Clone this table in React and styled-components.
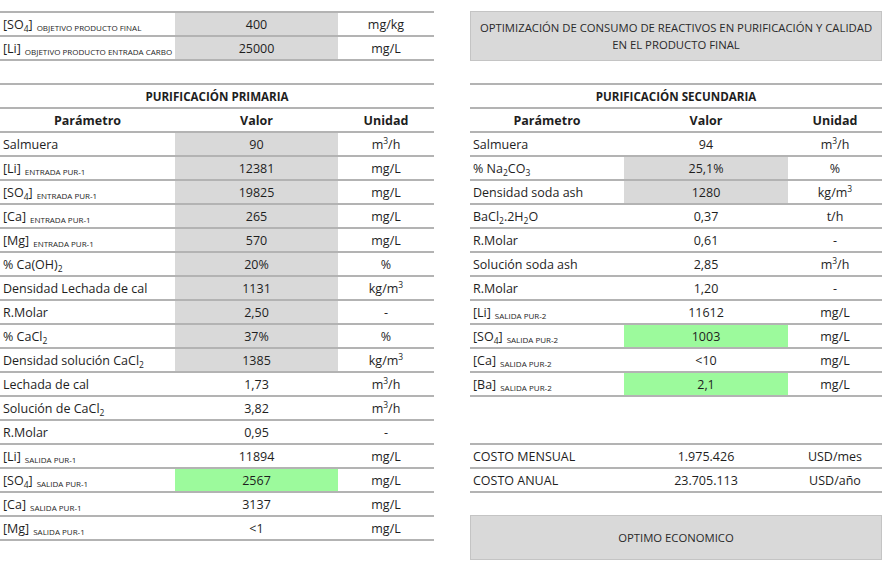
import React from "react";
import styled, { createGlobalStyle } from "styled-components";

const LINE = "#b3b3b3";
const GRAY = "#d9d9d9";
const GREEN = "#9cfa9c";

const GlobalStyle = createGlobalStyle`
  html, body {
    margin: 0;
    padding: 0;
    background: #ffffff;
  }
  body {
    font-family: "Open Sans", "Liberation Sans", sans-serif;
    font-size: 12.5px;
    color: #1e1e1e;
  }
`;

const Page = styled.div`
  display: grid;
  grid-template-columns: 434px 412px;
  column-gap: 36px;
  padding-top: 11px;
  width: 886px;
  height: 563px;
  box-sizing: border-box;
  overflow: hidden;
`;

const Column = styled.div`
  display: flex;
  flex-direction: column;
`;

const Table = styled.div`
  display: grid;
  grid-template-columns: ${(p) => p.cols};
  border-top: 2px solid ${LINE};
  margin-top: ${(p) => p.gap || 0}px;
`;

const Cell = styled.div`
  height: 24px;
  box-sizing: border-box;
  border-bottom: 2px solid ${LINE};
  display: flex;
  align-items: center;
  justify-content: ${(p) => (p.left ? "flex-start" : "center")};
  padding-left: ${(p) => (p.left ? "3px" : "0")};
  padding-top: 1px;
  background: ${(p) => p.fill || "transparent"};
  white-space: nowrap;
  overflow: hidden;
  font-weight: ${(p) => (p.bold ? 700 : 400)};
`;

const SectionTitle = styled(Cell)`
  grid-column: 1 / -1;
  font-weight: 700;
  font-size: 11.6px;
`;

const Tag = styled.span`
  font-size: 8px;
  margin-left: 4px;
  position: relative;
  top: 2px;
`;

const Sub = styled.sub`
  font-size: 8.5px;
  vertical-align: -3px;
  line-height: 0;
`;

const Sup = styled.sup`
  font-size: 8.5px;
  vertical-align: 5px;
  line-height: 0;
`;

const TitleBox = styled.div`
  height: ${(p) => p.h || 50}px;
  box-sizing: border-box;
  background: ${GRAY};
  border: 1px solid #c4c4c4;
  display: flex;
  align-items: center;
  justify-content: center;
  text-align: center;
  font-size: 11.3px;
  line-height: 17px;
  color: #2a2a2a;
  margin-top: ${(p) => p.gap || 0}px;
`;

const m3h = (
  <>
    m<Sup>3</Sup>/h
  </>
);
const kgm3 = (
  <>
    kg/m<Sup>3</Sup>
  </>
);
const SO4 = (
  <>
    [SO<Sub>4</Sub>]
  </>
);

const topRows = [
  [<>{SO4}<Tag>OBJETIVO PRODUCTO FINAL</Tag></>, "400", "mg/kg", GRAY],
  [<>[Li]<Tag>OBJETIVO PRODUCTO ENTRADA CARBO</Tag></>, "25000", "mg/L", GRAY],
];

const primaryRows = [
  ["Salmuera", "90", m3h, GRAY],
  [<>[Li]<Tag>ENTRADA PUR-1</Tag></>, "12381", "mg/L", GRAY],
  [<>{SO4}<Tag>ENTRADA PUR-1</Tag></>, "19825", "mg/L", GRAY],
  [<>[Ca]<Tag>ENTRADA PUR-1</Tag></>, "265", "mg/L", GRAY],
  [<>[Mg]<Tag>ENTRADA PUR-1</Tag></>, "570", "mg/L", GRAY],
  [<>% Ca(OH)<Sub>2</Sub></>, "20%", "%", GRAY],
  ["Densidad Lechada de cal", "1131", kgm3, GRAY],
  ["R.Molar", "2,50", "-", GRAY],
  [<>% CaCl<Sub>2</Sub></>, "37%", "%", GRAY],
  [<>Densidad solución CaCl<Sub>2</Sub></>, "1385", kgm3, GRAY],
  ["Lechada de cal", "1,73", m3h],
  [<>Solución de CaCl<Sub>2</Sub></>, "3,82", m3h],
  ["R.Molar", "0,95", "-"],
  [<>[Li]<Tag>SALIDA PUR-1</Tag></>, "11894", "mg/L"],
  [<>{SO4}<Tag>SALIDA PUR-1</Tag></>, "2567", "mg/L", GREEN],
  [<>[Ca]<Tag>SALIDA PUR-1</Tag></>, "3137", "mg/L"],
  [<>[Mg]<Tag>SALIDA PUR-1</Tag></>, "<1", "mg/L"],
];

const secondaryRows = [
  ["Salmuera", "94", m3h],
  [<>% Na<Sub>2</Sub>CO<Sub>3</Sub></>, "25,1%", "%", GRAY],
  ["Densidad soda ash", "1280", kgm3, GRAY],
  [<>BaCl<Sub>2</Sub>.2H<Sub>2</Sub>O</>, "0,37", "t/h"],
  ["R.Molar", "0,61", "-"],
  ["Solución soda ash", "2,85", m3h],
  ["R.Molar", "1,20", "-"],
  [<>[Li]<Tag>SALIDA PUR-2</Tag></>, "11612", "mg/L"],
  [<>{SO4}<Tag>SALIDA PUR-2</Tag></>, "1003", "mg/L", GREEN],
  [<>[Ca]<Tag>SALIDA PUR-2</Tag></>, "<10", "mg/L"],
  [<>[Ba]<Tag>SALIDA PUR-2</Tag></>, "2,1", "mg/L", GREEN],
];

const costRows = [
  ["COSTO MENSUAL", "1.975.426", "USD/mes"],
  ["COSTO ANUAL", "23.705.113", "USD/año"],
];

function Rows({ rows }) {
  return rows.map(([label, value, unit, fill], i) => (
    <React.Fragment key={i}>
      <Cell left>
        <span>{label}</span>
      </Cell>
      <Cell fill={fill}>
        <span>{value}</span>
      </Cell>
      <Cell>
        <span>{unit}</span>
      </Cell>
    </React.Fragment>
  ));
}

function Header() {
  return (
    <>
      <Cell bold>Parámetro</Cell>
      <Cell bold>Valor</Cell>
      <Cell bold>Unidad</Cell>
    </>
  );
}

export default function App() {
  return (
    <>
      <GlobalStyle />
      <Page>
        <Column>
          <Table cols="175px 163px 96px">
            <Rows rows={topRows} />
          </Table>
          <Table cols="175px 163px 96px" gap={22}>
            <SectionTitle>PURIFICACIÓN PRIMARIA</SectionTitle>
            <Header />
            <Rows rows={primaryRows} />
          </Table>
        </Column>
        <Column>
          <TitleBox>
            OPTIMIZACIÓN DE CONSUMO DE REACTIVOS EN PURIFICACIÓN Y CALIDAD
            <br />
            EN EL PRODUCTO FINAL
          </TitleBox>
          <Table cols="154px 164px 94px" gap={22}>
            <SectionTitle>PURIFICACIÓN SECUNDARIA</SectionTitle>
            <Header />
            <Rows rows={secondaryRows} />
          </Table>
          <Table cols="154px 164px 94px" gap={46}>
            <Rows rows={costRows} />
          </Table>
          <TitleBox gap={22} h={45}>
            OPTIMO ECONOMICO
          </TitleBox>
        </Column>
      </Page>
    </>
  );
}
